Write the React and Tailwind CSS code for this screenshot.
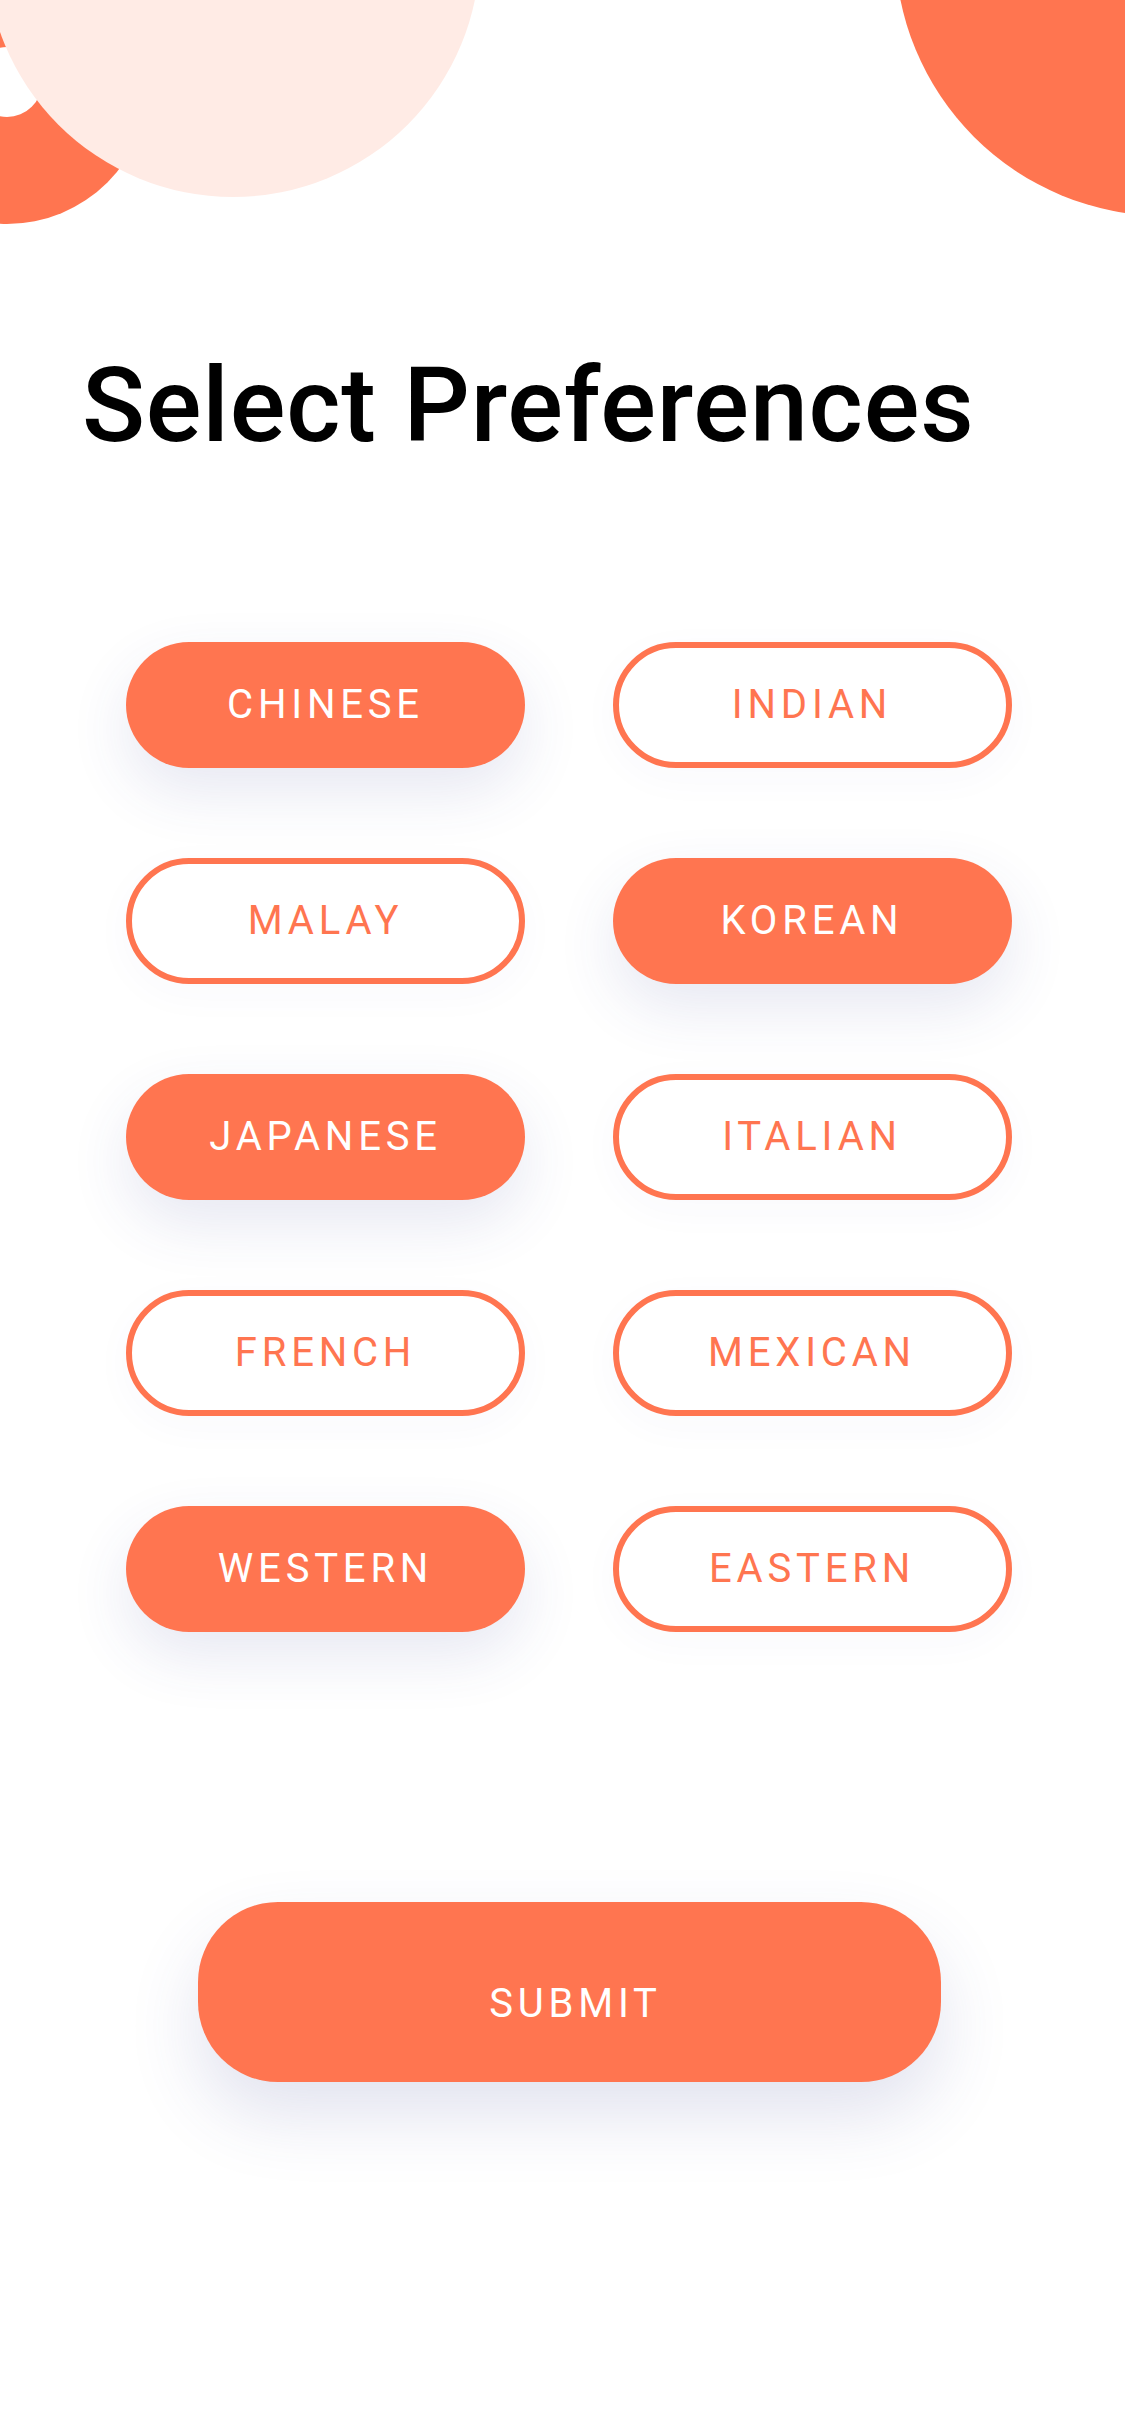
import React, { useState } from 'react';

const cuisines = [
  { name: 'CHINESE', on: true },
  { name: 'INDIAN', on: false },
  { name: 'MALAY', on: false },
  { name: 'KOREAN', on: true },
  { name: 'JAPANESE', on: true },
  { name: 'ITALIAN', on: false },
  { name: 'FRENCH', on: false },
  { name: 'MEXICAN', on: false },
  { name: 'WESTERN', on: true },
  { name: 'EASTERN', on: false },
];

const Choice = ({ label, active, onClick }) => {
  return (
    <button
      onClick={onClick}
      className={
        active
          ? 'h-[126px] w-[399px] rounded-full bg-[#ff7550] text-white text-[40px] tracking-[0.12em] shadow-[0_24px_60px_rgba(60,68,150,0.12)]'
          : 'h-[126px] w-[399px] rounded-full border-[6px] border-[#ff7550] bg-white text-[#ff7550] text-[40px] tracking-[0.12em] shadow-[0_10px_40px_rgba(60,68,150,0.03)]'
      }
    >
      {label}
    </button>
  );
};

export default function App() {
  const [items, setItems] = useState(cuisines);

  const toggle = (idx) => {
    setItems(prev => prev.map((it, i) => (i === idx ? { ...it, on: !it.on } : it)));
  };

  return (
    <div className="relative w-full min-h-[2436px] overflow-hidden bg-white font-['Roboto',sans-serif]">
      {/* decorative circles */}
      <div className="absolute left-[-135px] top-[-60px] w-[284px] h-[284px] rounded-full bg-[#ff7550]" />
      <div className="absolute left-[-28px] top-[47px] w-[70px] h-[70px] rounded-full bg-white" />
      <div className="absolute left-[-14px] top-[-297px] w-[494px] h-[494px] rounded-full bg-[#ffebe5]" />
      <div className="absolute left-[895px] top-[-324px] w-[540px] h-[540px] rounded-full bg-[#ff7550]" />

      <div className="relative flex flex-col pt-[354px]">
        <h1 className="pl-[82px] text-[104px] leading-none font-medium tracking-[0.008em] text-black">Select Preferences</h1>

        <div className="flex flex-col items-start pl-[126px] pt-[184px] gap-[270px]">
          <div className="w-[886px] grid grid-cols-2 gap-x-[87px] gap-y-[90px]">
            {items.map((it, i) => (
              <Choice key={it.name} label={it.name} active={it.on} onClick={() => toggle(i)} />
            ))}
          </div>

          <button className="ml-[72px] w-[743px] h-[180px] rounded-[80px] bg-[#ff7550] text-white text-[40px] tracking-[0.12em] pt-6 pl-3 shadow-[0_34px_70px_rgba(60,68,150,0.15)]">
            SUBMIT
          </button>
        </div>
      </div>
    </div>
  );
}
